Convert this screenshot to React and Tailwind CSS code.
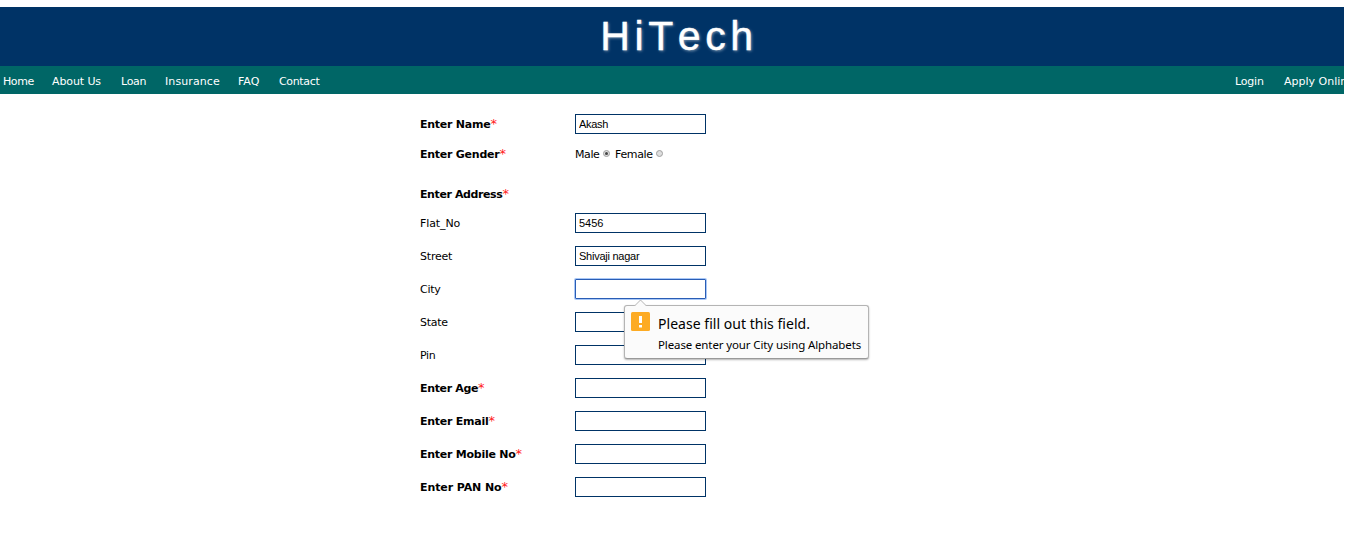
import React from 'react';

const leftLinks = [
  { label: 'Home', cls: 'w-[49px] tracking-[-0.4px]' },
  { label: 'About Us', cls: 'w-[69px] tracking-[-0.1px]' },
  { label: 'Loan', cls: 'w-[44px] tracking-[-0.3px]' },
  { label: 'Insurance', cls: 'w-[73px] tracking-[0.1px]' },
  { label: 'FAQ', cls: 'w-[41px]' },
  { label: 'Contact', cls: 'w-[60px] tracking-[-0.35px]' },
];

const rows = [
  { label: 'Enter Name', required: true, value: 'Akash', gap: '', track: 'tracking-[-0.25px]', inputTrack: 'tracking-[-0.3px]' },
  { label: 'Enter Gender', required: true, gender: true, gap: 'mt-[10px]', track: 'tracking-[-0.25px]' },
  { label: 'Enter Address', required: true, heading: true, gap: 'mt-5', track: 'tracking-[-0.4px]' },
  { label: 'Flat_No', value: '5456', gap: 'mt-[9px]', track: 'tracking-[-0.1px]' },
  { label: 'Street', value: 'Shivaji nagar', gap: 'mt-[13px]', track: 'tracking-[-0.2px]', inputTrack: 'tracking-[-0.25px]' },
  { label: 'City', value: '', focused: true, gap: 'mt-[13px]', track: 'tracking-[-0.3px]' },
  { label: 'State', value: '', gap: 'mt-[13px]', track: 'tracking-[-0.3px]' },
  { label: 'Pin', value: '', gap: 'mt-[13px]', track: 'tracking-[-0.3px]' },
  { label: 'Enter Age', required: true, value: '', gap: 'mt-[13px]', track: 'tracking-[-0.35px]' },
  { label: 'Enter Email', required: true, value: '', gap: 'mt-[13px]', track: 'tracking-[-0.25px]' },
  { label: 'Enter Mobile No', required: true, value: '', gap: 'mt-[13px]', track: 'tracking-[-0.25px]' },
  { label: 'Enter PAN No', required: true, value: '', gap: 'mt-[13px]', track: 'tracking-[-0.1px]' },
];

function Radio({ checked }) {
  return (
    <span className="mb-px flex h-[7px] w-[7px] shrink-0 items-center justify-center rounded-full border border-[#a0a0a0] bg-[#dedede]">
      {checked && <span className="h-[3px] w-[3px] rounded-full bg-[#444]" />}
    </span>
  );
}

function Gender() {
  return (
    <div className="flex items-center">
      <span className="w-[28px] pt-[2px] leading-4 tracking-[-0.4px]">Male</span>
      <Radio checked />
      <span className="ml-[5px] w-[41px] pt-[2px] leading-4 tracking-[-0.35px]">Female</span>
      <Radio />
    </div>
  );
}

function ValidationBubble() {
  return (
    <div className="absolute left-[49px] top-[26px] z-10 h-[54px] w-[245px] rounded-[3px] border border-[#b4b4b4] border-b-[#999] bg-[#fbfbfb] font-['Noto_Sans',sans-serif] shadow-[0_1px_2px_rgba(0,0,0,0.3)]">
      <svg className="absolute left-[9px] top-[-7px]" width="13" height="8" viewBox="0 0 13 8">
        <path d="M0 7.5 6.5 1 13 7.5V8H0Z" fill="#fbfbfb" />
        <path d="M0.5 7 6.5 1 12.5 7" fill="none" stroke="#b4b4b4" />
      </svg>
      <div className="flex pl-[6px] pt-[6px]">
        <svg width="19" height="19" viewBox="0 0 19 19" className="shrink-0">
          <rect width="19" height="19" rx="1.5" fill="#fdab23" />
          <path d="M8 4h3v7H8zM8 13h3v2.5H8z" fill="#fff" />
        </svg>
        <div className="ml-2 whitespace-nowrap text-black">
          <p className="mt-[2px] text-[14px] leading-5 tracking-[0.03px]">Please fill out this field.</p>
          <p className="mt-[1px] text-[11.5px] leading-5 tracking-[-0.12px]">Please enter your City using Alphabets</p>
        </div>
      </div>
    </div>
  );
}

function Field({ value, focused, track = '' }) {
  return (
    <div className="relative">
      <input
        type="text"
        defaultValue={value}
        className={`block h-5 w-[131px] border bg-white px-[3px] font-['Liberation_Sans',sans-serif] text-[11px] text-black outline-none ${track} ${
          focused ? 'rounded-[1px] border-[#2a5db5] shadow-[0_0_0_1px_#a9c8f7]' : 'border-[#003366]'
        }`}
      />
      {focused && <ValidationBubble />}
    </div>
  );
}

function Row({ row }) {
  return (
    <div className={`flex h-5 items-center ${row.gap}`}>
      <div className="flex h-[18px] w-[155px] shrink-0 items-start whitespace-nowrap pt-[2px] leading-4">
        <span className={`${row.required ? 'font-bold' : ''} ${row.track}`}>{row.label}</span>
        {row.required && <span className="text-[13px] leading-[14px] text-[#ff2020]">*</span>}
      </div>
      {row.gender && <Gender />}
      {!row.gender && !row.heading && <Field value={row.value} focused={row.focused} track={row.inputTrack} />}
    </div>
  );
}

export default function App() {
  return (
    <div className="h-[539px] overflow-hidden bg-white pt-[7px] font-['DejaVu_Sans',Verdana,sans-serif] text-[11px] text-black">
      <header className="w-[1344px]">
        <h1 className="flex h-[59px] items-center justify-center bg-[#003366] pl-[14px] font-['Liberation_Sans',sans-serif] text-[41px] font-normal leading-none tracking-[4.6px] text-white [font-kerning:none] [-webkit-text-stroke:0.4px_white] [text-shadow:1px_1px_3px_rgba(255,255,255,0.5)]">
          HiTech
        </h1>
        <nav className="flex h-7 items-center overflow-hidden whitespace-nowrap bg-[#006666] pl-[3px] pt-[4px] leading-4 text-white">
          {leftLinks.map((l) => (
            <a key={l.label} className={`shrink-0 ${l.cls}`}>{l.label}</a>
          ))}
          <div className="ml-auto flex w-[109px] shrink-0">
            <a className="w-[49px] shrink-0 tracking-[-0.2px]">Login</a>
            <a className="shrink-0">Apply Online</a>
          </div>
        </nav>
      </header>
      <form className="ml-[420px] pt-5">
        {rows.map((row) => (
          <Row key={row.label} row={row} />
        ))}
      </form>
    </div>
  );
}
